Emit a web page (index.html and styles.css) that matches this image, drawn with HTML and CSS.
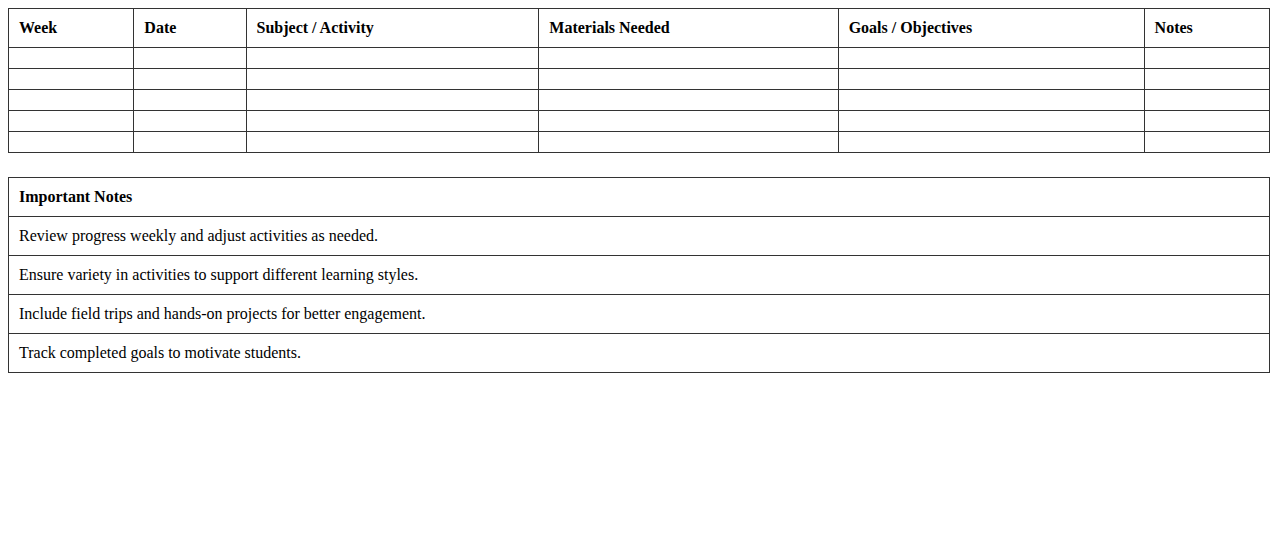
FILE: index.html
```html
<!DOCTYPE html>
<html>
<head>
<meta charset="utf-8">
<link rel="stylesheet" href="styles.css">
</head>
<body>
<table class="plan">
  <thead>
    <tr>
      <th>Week</th>
      <th>Date</th>
      <th>Subject / Activity</th>
      <th>Materials Needed</th>
      <th>Goals / Objectives</th>
      <th>Notes</th>
    </tr>
  </thead>
  <tbody>
    <tr><td></td><td></td><td></td><td></td><td></td><td></td></tr>
    <tr><td></td><td></td><td></td><td></td><td></td><td></td></tr>
    <tr><td></td><td></td><td></td><td></td><td></td><td></td></tr>
    <tr><td></td><td></td><td></td><td></td><td></td><td></td></tr>
    <tr><td></td><td></td><td></td><td></td><td></td><td></td></tr>
  </tbody>
</table>
<table class="notes">
  <thead>
    <tr><th>Important Notes</th></tr>
  </thead>
  <tbody>
    <tr><td>Review progress weekly and adjust activities as needed.</td></tr>
    <tr><td>Ensure variety in activities to support different learning styles.</td></tr>
    <tr><td>Include field trips and hands-on projects for better engagement.</td></tr>
    <tr><td>Track completed goals to motivate students.</td></tr>
  </tbody>
</table>
</body>
</html>
```
FILE: styles.css
```css
body {
  margin: 8px;
  font-family: "Liberation Serif", "Times New Roman", serif;
  font-size: 16px;
  color: #000;
  background: #fff;
}
table {
  width: 100%;
  border-collapse: collapse;
}
th, td {
  border: 1px solid #333;
  padding: 10px;
  text-align: left;
}
th {
  font-weight: bold;
}
.plan {
  margin-bottom: 24px;
}
```
